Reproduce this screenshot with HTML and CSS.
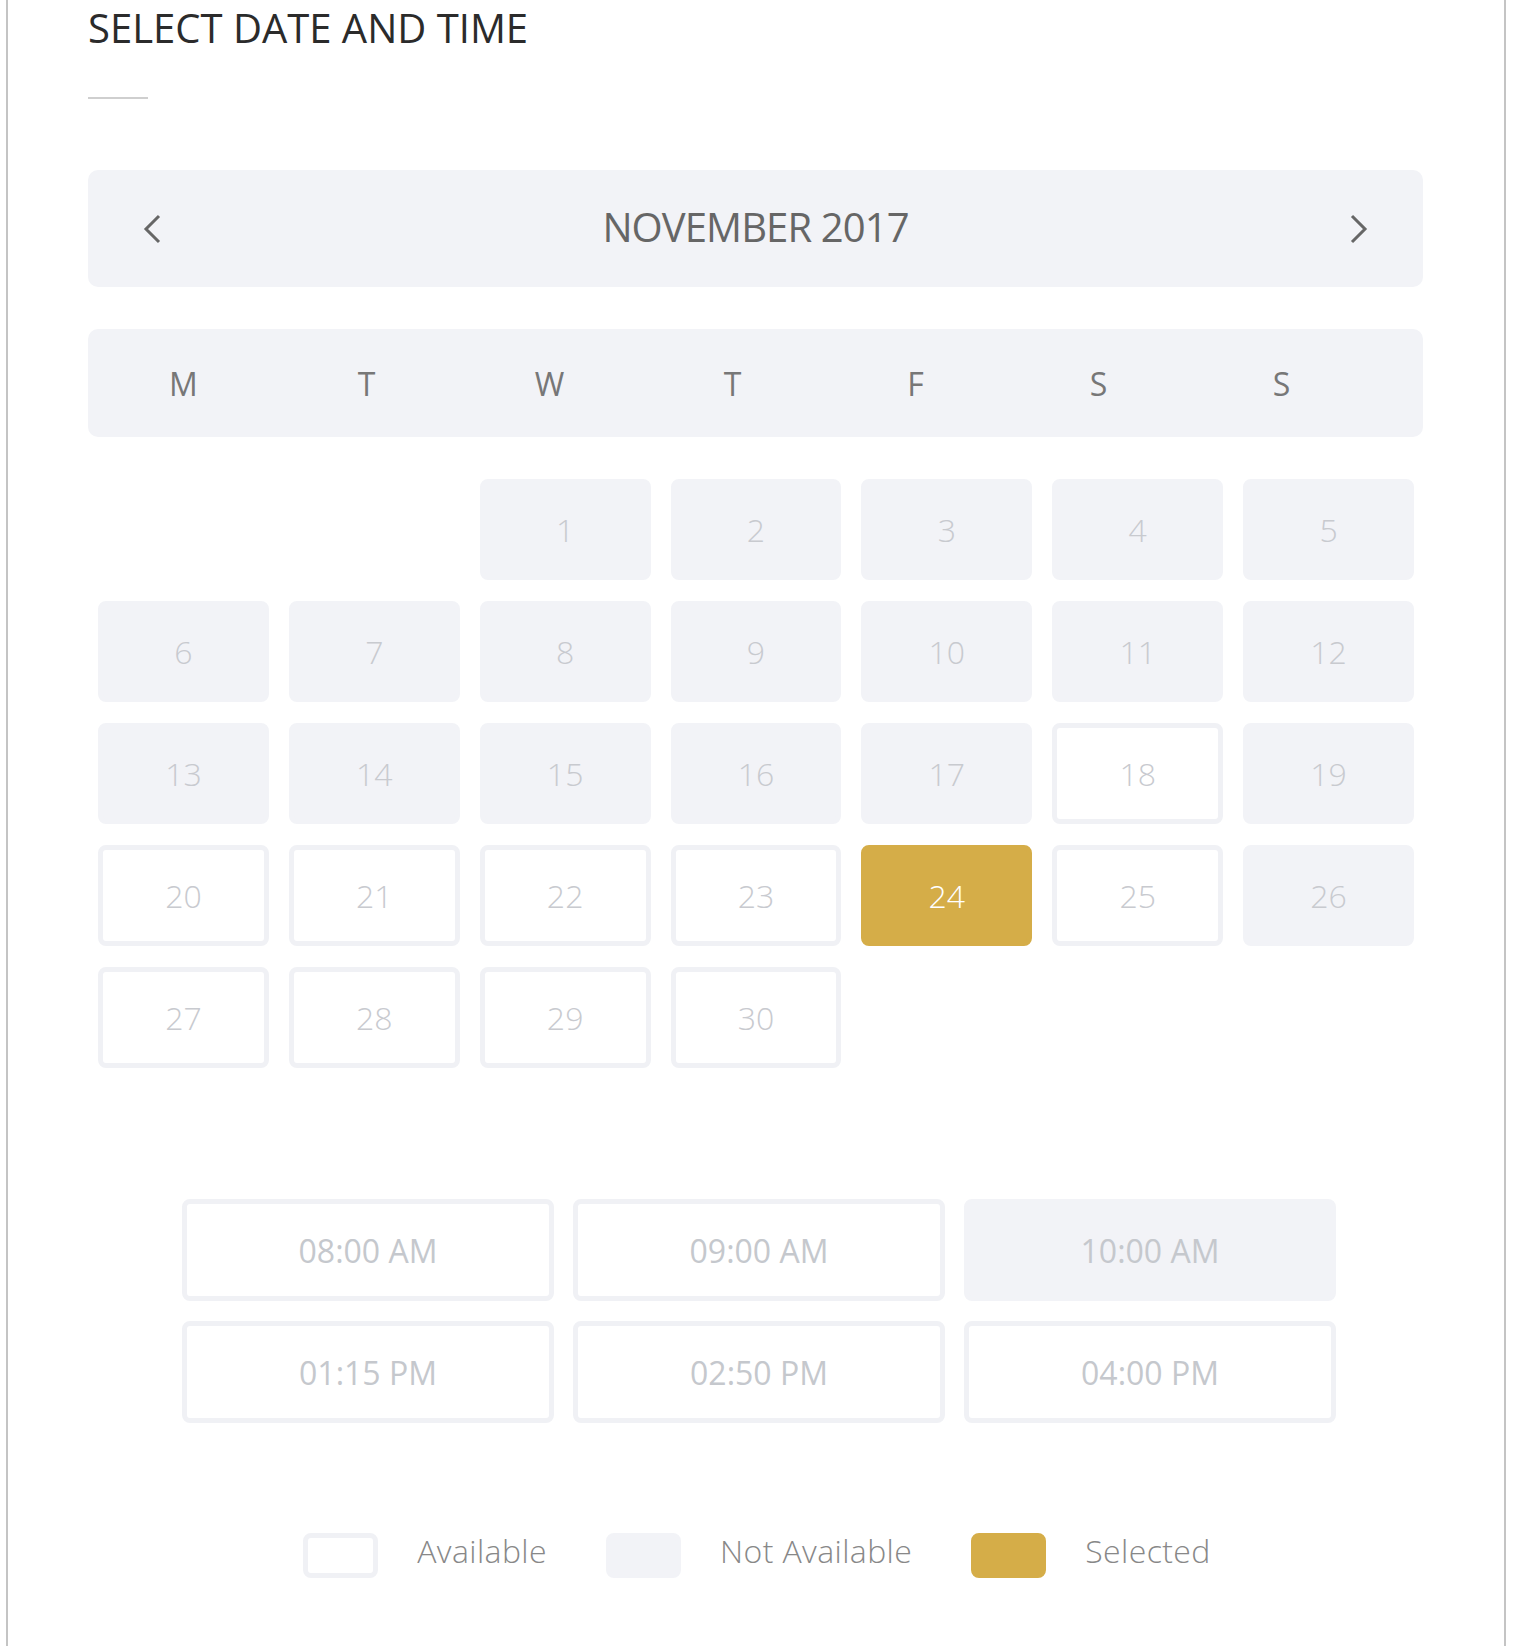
FILE: index.html
```html
<!DOCTYPE html>
<html lang="en">
<head>
  <meta charset="UTF-8" />
  <meta name="viewport" content="width=device-width, initial-scale=1.0"/>
  <title>Select date and time</title>
  <link rel="stylesheet" href="styles.css">
</head>
<body>

  <div class="card">
    <h2 class="title">SELECT DATE AND TIME</h2>
    <div class="rule"></div>

    <div class="month-bar">
      <button class="nav-btn" aria-label="Previous month">
        <svg width="19" height="30" viewBox="0 0 19 30"><polyline points="16,2 3,15 16,28" fill="none" stroke="#666" stroke-width="3"/></svg>
      </button>
      <span class="month-name">NOVEMBER 2017</span>
      <button class="nav-btn" aria-label="Next month">
        <svg width="19" height="30" viewBox="0 0 19 30"><polyline points="3,2 16,15 3,28" fill="none" stroke="#666" stroke-width="3"/></svg>
      </button>
    </div>

    <div class="weekdays">
      <span>M</span><span>T</span><span>W</span><span>T</span><span>F</span><span>S</span><span>S</span>
    </div>

    <div class="days">
      <div class="day off first">1</div>
      <div class="day off">2</div>
      <div class="day off">3</div>
      <div class="day off">4</div>
      <div class="day off">5</div>
      <div class="day off">6</div>
      <div class="day off">7</div>
      <div class="day off">8</div>
      <div class="day off">9</div>
      <div class="day off">10</div>
      <div class="day off">11</div>
      <div class="day off">12</div>
      <div class="day off">13</div>
      <div class="day off">14</div>
      <div class="day off">15</div>
      <div class="day off">16</div>
      <div class="day off">17</div>
      <div class="day">18</div>
      <div class="day off">19</div>
      <div class="day">20</div>
      <div class="day">21</div>
      <div class="day">22</div>
      <div class="day">23</div>
      <div class="day selected">24</div>
      <div class="day">25</div>
      <div class="day off">26</div>
      <div class="day">27</div>
      <div class="day">28</div>
      <div class="day">29</div>
      <div class="day">30</div>
    </div>

    <div class="slots">
      <div class="slot">08:00 AM</div>
      <div class="slot">09:00 AM</div>
      <div class="slot off">10:00 AM</div>
      <div class="slot">01:15 PM</div>
      <div class="slot">02:50 PM</div>
      <div class="slot">04:00 PM</div>
    </div>

    <div class="legend">
      <div class="legend-item"><span class="swatch"></span><span class="legend-label">Available</span></div>
      <div class="legend-item"><span class="swatch off"></span><span class="legend-label">Not Available</span></div>
      <div class="legend-item"><span class="swatch selected"></span><span class="legend-label">Selected</span></div>
    </div>
  </div>

</body>
</html>
```

FILE: styles.css
```css
body {
  margin: 0;
  font-family: 'Open Sans', 'Liberation Sans', sans-serif;
  background: #fff;
  color: #333;
}
.card {
  box-sizing: border-box;
  width: 1500px;
  min-height: 1646px;
  margin-left: 6px;
  padding: 8px 81px 0 80px;
  border-left: 2px solid #c4c4c4;
  border-right: 2px solid #c4c4c4;
}
.title {
  margin: 0;
  font-size: 40px;
  line-height: 40px;
  font-weight: 400;
  color: #2b2b2b;
}
.rule {
  width: 60px;
  height: 2px;
  margin-top: 49px;
  background: #cfcfcf;
}
.month-bar {
  display: flex;
  align-items: center;
  justify-content: space-between;
  height: 117px;
  margin-top: 71px;
  padding: 0 55px 0 55px;
  background: #f2f3f7;
  border-radius: 10px;
}
.nav-btn {
  padding: 0;
  border: none;
  background: none;
  cursor: pointer;
  line-height: 0;
}
.month-name {
  font-size: 40px;
  line-height: 40px;
  padding-bottom: 3px;
  color: #666;
  letter-spacing: -0.9px;
}
.weekdays {
  display: grid;
  grid-template-columns: repeat(7, 183px);
  align-items: center;
  height: 108px;
  margin-top: 42px;
  padding-left: 4px;
  background: #f2f3f7;
  border-radius: 10px;
  font-size: 32px;
  color: #777;
  text-align: center;
}
.days {
  display: grid;
  grid-template-columns: repeat(7, 1fr);
  grid-auto-rows: 101px;
  column-gap: 20px;
  row-gap: 21px;
  margin-top: 42px;
  padding: 0 9px 0 10px;
}
.day {
  box-sizing: border-box;
  display: flex;
  align-items: center;
  justify-content: center;
  border: 5px solid #f0f1f5;
  border-radius: 8px;
  background: #fff;
  font-size: 32px;
  font-weight: 300;
  color: #c8cacf;
}
.day.first {
  grid-column-start: 3;
}
.day.off {
  background: #f2f3f7;
  border-color: #f2f3f7;
}
.day.selected {
  background: #d5ad48;
  border-color: #d5ad48;
  color: #fff;
}
.slots {
  display: grid;
  grid-template-columns: repeat(3, 372px);
  grid-auto-rows: 102px;
  justify-content: center;
  column-gap: 19px;
  row-gap: 20px;
  margin-top: 131px;
  padding-left: 7px;
}
.slot {
  box-sizing: border-box;
  display: flex;
  align-items: center;
  justify-content: center;
  border: 5px solid #f0f1f5;
  border-radius: 8px;
  font-size: 32px;
  color: #c5c8cd;
}
.slot.off {
  background: #f2f3f7;
  border-color: #f2f3f7;
}
.legend {
  display: flex;
  justify-content: center;
  align-items: center;
  gap: 59px;
  margin-top: 110px;
  padding-left: 3px;
}
.legend-item {
  display: flex;
  align-items: center;
  font-size: 32px;
  font-weight: 300;
  color: #888;
  letter-spacing: 0.4px;
}
.legend-label {
  line-height: 32px;
  padding-bottom: 9px;
}
.swatch {
  box-sizing: border-box;
  width: 75px;
  height: 45px;
  margin-right: 39px;
  border: 5px solid #f0f1f5;
  border-radius: 8px;
}
.swatch.off {
  background: #f2f3f7;
  border-color: #f2f3f7;
}
.swatch.selected {
  background: #d5ad48;
  border-color: #d5ad48;
}
```
